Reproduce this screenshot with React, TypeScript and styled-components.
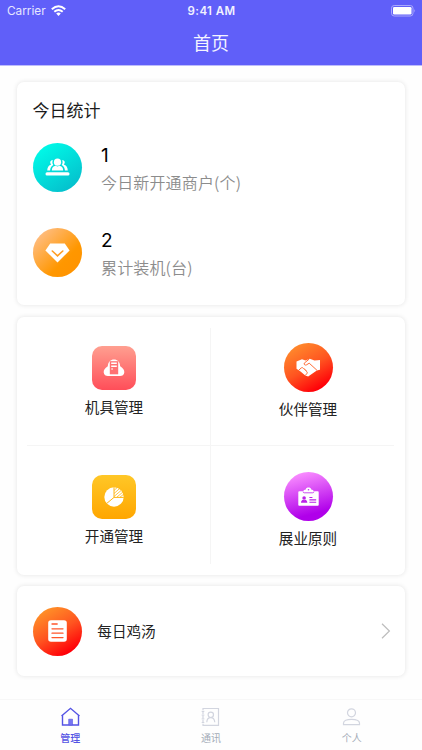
import React from "react";
import styled, { createGlobalStyle } from "styled-components";

const GlobalStyle = createGlobalStyle`
  *, *::before, *::after { box-sizing: border-box; }
  body {
    margin: 0;
    background: #fefefe;
    color: #222;
    font-family: "Noto Sans CJK SC", sans-serif;
  }
`;

const Screen = styled.div`
  width: 422px;
  height: 750px;
  display: flex;
  flex-direction: column;
  overflow: hidden;
`;

const Header = styled.header`
  height: 66px;
  flex: none;
  color: #fff;
  background: #605ff9;
  border-bottom: 1px solid #bdbcfb;
`;

const StatusBar = styled.div`
  height: 22px;
  display: grid;
  grid-template-columns: 1fr auto 1fr;
  align-items: center;
  padding: 0 6px 0 7px;
  font: 400 11.8px/22px Inter, sans-serif;
`;

const Carrier = styled.div`
  display: flex;
  align-items: center;
  gap: 5px;
  color: #e6e6ff;
  svg { margin-top: -2px; }
`;

const Clock = styled.div`
  font-weight: 600;
  font-size: 11.5px;
  letter-spacing: 0.4px;
  color: #f1f1ff;
`;

const BatterySlot = styled.div`
  display: flex;
  justify-content: flex-end;
`;

const PageTitle = styled.h1`
  margin: -1px 0 0;
  text-align: center;
  font-size: 18px;
  line-height: 42px;
  font-weight: 400;
  color: #f4f4ff;
`;

const Content = styled.main`
  flex: 1;
  padding: 16px 17px 0;
`;

const Card = styled.section<{ $height: number; $gap?: number }>`
  height: ${(p) => p.$height}px;
  margin-bottom: ${(p) => p.$gap ?? 0}px;
  background: #fff;
  border-radius: 7px;
  box-shadow: 0 0 5px rgba(0, 0, 0, 0.11);
`;

const StatsCard = styled(Card)`
  padding: 15px 15.5px 0;
`;

const CardTitle = styled.h2`
  margin: 0 0 21px;
  font-size: 17px;
  line-height: 25px;
  font-weight: 400;
  color: #1b1b1b;
`;

const Stat = styled.div`
  display: flex;
  align-items: center;
  gap: 19.5px;
  height: 49px;
  margin-bottom: 36px;
`;

const StatValue = styled.div`
  margin-top: 3px;
  font: 400 19px/24px Inter, sans-serif;
  color: #000;
`;

const StatLabel = styled.div`
  margin-top: 1px;
  font-size: 16px;
  line-height: 26px;
  font-weight: 350;
  letter-spacing: 0.15px;
  color: #8c8c8c;
`;

const Badge = styled.div<{ $fill: string; $square?: boolean }>`
  flex: none;
  width: ${(p) => (p.$square ? 44 : 49)}px;
  height: ${(p) => (p.$square ? 44 : 49)}px;
  border-radius: ${(p) => (p.$square ? "10px" : "50%")};
  background: ${(p) => p.$fill};
  display: grid;
  place-items: center;
`;

const MenuCard = styled(Card)`
  padding: 11px 11px 11px 10px;
  display: grid;
  grid-template-columns: 183px 1fr;
  grid-template-rows: 117px 1fr;
`;

const MenuItem = styled.div<{ $top: number; $right?: boolean; $bottom?: boolean }>`
  display: flex;
  flex-direction: column;
  align-items: center;
  padding-top: ${(p) => p.$top}px;
  padding-left: ${(p) => (p.$right ? 11 : 0)}px;
  padding-right: ${(p) => (p.$right ? 0 : 9)}px;
  border-left: ${(p) => (p.$right ? "1px solid #f5f5f5" : "0")};
  border-top: ${(p) => (p.$bottom ? "1px solid #f5f5f5" : "0")};
`;

const MenuLabel = styled.div<{ $gap: number }>`
  margin-top: ${(p) => p.$gap}px;
  font-size: 14.6px;
  line-height: 22px;
`;

const LinkCard = styled(Card)`
  display: flex;
  align-items: center;
  padding: 0 14px 0 15.5px;
`;

const LinkLabel = styled.div`
  flex: 1;
  margin-left: 15.8px;
  font-size: 14.6px;
  line-height: 22px;
`;

const TabBar = styled.nav`
  height: 51px;
  flex: none;
  display: grid;
  grid-template-columns: repeat(3, 1fr);
  border-top: 1px solid #f7f7f7;
  background: #fefefe;
`;

const Tab = styled.div<{ $active?: boolean }>`
  display: flex;
  flex-direction: column;
  align-items: center;
  padding-top: 7px;
  color: ${(p) => (p.$active ? "#5453e4" : "#d2d5df")};
`;

const TabLabel = styled.span<{ $active?: boolean }>`
  margin-top: 4px;
  font-size: 10px;
  line-height: 14px;
  font-weight: ${(p) => (p.$active ? 500 : 400)};
  color: ${(p) => (p.$active ? "#5453e4" : "#a4acb8")};
`;

const WifiIcon = () => (
  <svg width="15" height="11" viewBox="0 0 15 11" fill="none" stroke="#fff" strokeWidth="2">
    <path d="M.8 4.2Q7.5-1.7 14.2 4.2M3.3 6.8Q7.5 3.2 11.7 6.8" />
    <path d="M5.2 8.5Q7.5 6.5 9.8 8.5L7.5 10.9Z" fill="#fff" stroke="none" />
  </svg>
);

const BatteryIcon = () => (
  <svg width="25" height="12" viewBox="0 0 25 12">
    <rect x=".5" y=".5" width="21.5" height="10.5" rx="2.7" fill="none" stroke="#aaa9fc" />
    <rect x="2" y="2" width="18.5" height="7.5" rx="1.3" fill="#fff" />
    <path d="M23.3 4Q25 5.7 23.3 7.5Z" fill="#aaa9fc" />
  </svg>
);

const TeamIcon = () => (
  <svg width="25" height="19" viewBox="0 0 25 19" fill="#fff">
    <circle cx="12.5" cy="4.2" r="3.6" />
    <path d="M6.8 12.5C6.8 9.4 8.6 8 10.5 7.7L12.5 8.6 14.5 7.7C16.4 8 18.2 9.4 18.2 12.5Z" />
    <path d="M8 2.3C5 2 4.5 5 6.2 6.4 3.8 7.2 2.4 9.2 2.2 12.5H5.1C5.2 9.7 6.2 8 8.3 6.9 7.2 5.4 7.1 3.7 8 2.3ZM17 2.3C20 2 20.5 5 18.8 6.4 21.2 7.2 22.6 9.2 22.8 12.5H19.9C19.8 9.7 18.8 8 16.7 6.9 17.8 5.4 17.9 3.7 17 2.3Z" />
    <rect x=".5" y="14.3" width="24" height="3.2" rx="1.5" />
  </svg>
);

const DiamondIcon = () => (
  <svg width="25" height="20" viewBox="0 0 25 20">
    <path d="M5.2.5H19.8L24.6 7.4 12.5 19.6.4 7.4Z" fill="#fff" />
    <path d="M7.3 8L12.5 12.8 17.8 8" fill="none" stroke="#ff9d21" strokeWidth="1.6" strokeLinecap="round" />
  </svg>
);

const CloudServerIcon = () => (
  <svg width="22" height="18" viewBox="0 0 22 18">
    <path d="M4.8 7.3C5.1 3 7.6.6 11 .6S16.9 3 17.2 7.3C20.2 9 21.5 11.3 21.3 13.4 21 15.7 19.3 17 17 17H5C2.7 17 1 15.7.7 13.4.5 11.3 1.8 9 4.8 7.3Z" fill="#fff" />
    <path d="M6.8 2.2H15.2V15.3H6.8Z" fill="#ff7273" />
    <path d="M8.2 3.6H13.8V5H8.2ZM8.2 6.6H13.8V8H8.2ZM8.2 9.4H10V10.6H8.2Z" fill="#fff" />
  </svg>
);

const HandshakeIcon = () => (
  <svg width="25" height="19" viewBox="0 0 25 19">
    <path d="M.5 3.5 6 1.3 9.5 2.5 13.8.8 18.5 2.5 24 2V11.8L20.8 12.4 12.2 18.5 9.3 17.5 4.2 13.2.5 10.8Z" fill="#fff" />
    <path d="M13.2 1.1 8.3 5.1C7.5 6.5 9.2 7.6 10.6 6.8L13.2 5.2 20.9 12.2" fill="none" stroke="#ff5c20" strokeWidth=".9" />
    <path d="M2.5 12.4 5.4 9.8Q6.7 9.2 7.5 10.5 8.9 10.6 9 12 10.6 12.2 10.7 13.7 11.8 14.5 10.8 15.7L9.2 17.5" fill="none" stroke="#ff5c20" strokeWidth=".9" />
  </svg>
);

const PieIcon = () => (
  <svg width="20" height="20" viewBox="0 0 20 20">
    <circle cx="10" cy="10" r="9.7" fill="#fff" />
    <path d="M10 .2V10.4H19.8M10 10.4 2.4 16.7" fill="none" stroke="#ffb512" strokeWidth="1" />
    <path d="M10 3.5 13.2.5M10 6.5 15.5 1.7M10 9.5 17.2 3.4M12.8 10.2 18.8 5.1M16 10.2 19.6 7.2" stroke="#ffb512" strokeWidth=".8" />
  </svg>
);

const IdCardIcon = () => (
  <svg width="21" height="19" viewBox="0 0 21 19">
    <path d="M1.2 4.2H5.3C5.6 2.9 6.6 2.5 7.8 2.4 8-.2 13 -.2 13.2 2.4 14.4 2.5 15.4 2.9 15.7 4.2H19.8Q20.7 4.2 20.7 5.2V18Q20.7 18.8 19.8 18.8H1.2Q.3 18.8.3 18V5.2Q.3 4.2 1.2 4.2Z" fill="#fff" />
    <circle cx="10.5" cy="2.8" r=".8" fill="#c337ed" />
    <path d="M5.2 4.7Q5.2 5.8 6.2 5.8H14.8Q15.8 5.8 15.8 4.7" fill="none" stroke="#c337ed" strokeWidth=".9" />
    <g fill="#bb22e8">
      <circle cx="6.1" cy="11" r="1.8" />
      <path d="M3 15.7C3 13.8 4 13 5.1 12.7L6.1 13.3 7.2 12.7C8.4 13 9.3 13.8 9.3 15.7Z" />
      <path d="M11.4 10H14.4V11H11.4ZM11.4 12.3H18.2V13.4H11.4ZM11.4 14.7H18.2V15.8H11.4Z" />
    </g>
  </svg>
);

const DocumentIcon = () => (
  <svg width="19" height="22" viewBox="0 0 19 22">
    <rect x=".2" y=".2" width="18.6" height="21.6" rx="2.8" fill="#fff" />
    <path d="M4 4H9.2M4 8.8H15M4 13.2H15M4 17.6H15" stroke="#ff562b" strokeWidth="1.3" strokeLinecap="round" />
  </svg>
);

const ChevronIcon = () => (
  <svg width="10" height="17" viewBox="0 0 10 17" fill="none" stroke="#bdbdbd" strokeWidth="1.2">
    <path d="M1 .7 8.4 8 1 15.3" />
  </svg>
);

const HomeIcon = () => (
  <svg width="19" height="20" viewBox="0 0 19 20" fill="none" stroke="currentColor" strokeWidth="1.4">
    <path d="M.5 9 9.5 1.3 18.5 9M1.5 8V18H17.5V8" />
    <path d="M7.7 12.2H11.5V18H7.7Z" fill="#7776f2" strokeWidth=".6" />
  </svg>
);

const ContactsIcon = () => (
  <svg width="19" height="20" viewBox="0 0 19 20" fill="none" stroke="currentColor" strokeWidth="1.2">
    <path d="M2 3V1.5H17.5V18.3H2V16.8M2 5V7M2 9V11M2 13V15M.7 4.3H3.3M.7 8.1H3.3M.7 11.9H3.3M.7 15.5H3.3" />
    <circle cx="9.8" cy="7.8" r="2.7" />
    <path d="M5.8 15.3C5.9 12.3 7.4 10.7 9.8 10.7S13.5 12.3 13.8 15.3" />
  </svg>
);

const PersonIcon = () => (
  <svg width="19" height="20" viewBox="0 0 19 20" fill="none" stroke="currentColor" strokeWidth="1.2">
    <circle cx="9.5" cy="5.8" r="4" />
    <path d="M1.5 17.7V16.2C1.5 13.5 4.8 12.3 9.5 12.3S17.5 13.5 17.5 16.2V17.7Z" />
  </svg>
);

const stats = [
  { value: "1", label: "今日新开通商户(个)", fill: "linear-gradient(145deg, #00fbe8 10%, #05baca 95%)", icon: <TeamIcon /> },
  { value: "2", label: "累计装机(台)", fill: "linear-gradient(135deg, #ffbd81 12%, #ff9700 65%, #ff9100)", icon: <DiamondIcon /> },
];

const menu = [
  { label: "机具管理", square: true, top: 18, gap: 5.5, fill: "linear-gradient(#ff9f90, #ff4e59)", icon: <CloudServerIcon /> },
  { label: "伙伴管理", square: false, top: 15, gap: 6, fill: "linear-gradient(150deg, #ff8c2d 10%, #ff5420 50%, #ff0008 85%)", icon: <HandshakeIcon /> },
  { label: "开通管理", square: true, top: 29, gap: 5.5, fill: "linear-gradient(#ffc727, #ffa600)", icon: <PieIcon /> },
  { label: "展业原则", square: false, top: 26, gap: 6, fill: "linear-gradient(165deg, #fa8eff 8%, #b000ea 80%)", icon: <IdCardIcon /> },
];

const tabs = [
  { label: "管理", icon: <HomeIcon />, active: true },
  { label: "通讯", icon: <ContactsIcon />, active: false },
  { label: "个人", icon: <PersonIcon />, active: false },
];

export default function App() {
  return (
    <Screen>
      <GlobalStyle />
      <Header>
        <StatusBar>
          <Carrier>Carrier<WifiIcon /></Carrier>
          <Clock>9:41 AM</Clock>
          <BatterySlot><BatteryIcon /></BatterySlot>
        </StatusBar>
        <PageTitle>首页</PageTitle>
      </Header>
      <Content>
        <StatsCard $height={223} $gap={12}>
          <CardTitle>今日统计</CardTitle>
          {stats.map((s) => (
            <Stat key={s.label}>
              <Badge $fill={s.fill}>{s.icon}</Badge>
              <div>
                <StatValue>{s.value}</StatValue>
                <StatLabel>{s.label}</StatLabel>
              </div>
            </Stat>
          ))}
        </StatsCard>
        <MenuCard $height={258} $gap={11}>
          {menu.map((m, i) => (
            <MenuItem key={m.label} $right={i % 2 === 1} $bottom={i > 1} $top={m.top}>
              <Badge $fill={m.fill} $square={m.square}>{m.icon}</Badge>
              <MenuLabel $gap={m.gap}>{m.label}</MenuLabel>
            </MenuItem>
          ))}
        </MenuCard>
        <LinkCard $height={90}>
          <Badge $fill="linear-gradient(150deg, #ff9428 10%, #ff5420 50%, #ff0008 85%)"><DocumentIcon /></Badge>
          <LinkLabel>每日鸡汤</LinkLabel>
          <ChevronIcon />
        </LinkCard>
      </Content>
      <TabBar>
        {tabs.map((t) => (
          <Tab key={t.label} $active={t.active}>
            {t.icon}
            <TabLabel $active={t.active}>{t.label}</TabLabel>
          </Tab>
        ))}
      </TabBar>
    </Screen>
  );
}
